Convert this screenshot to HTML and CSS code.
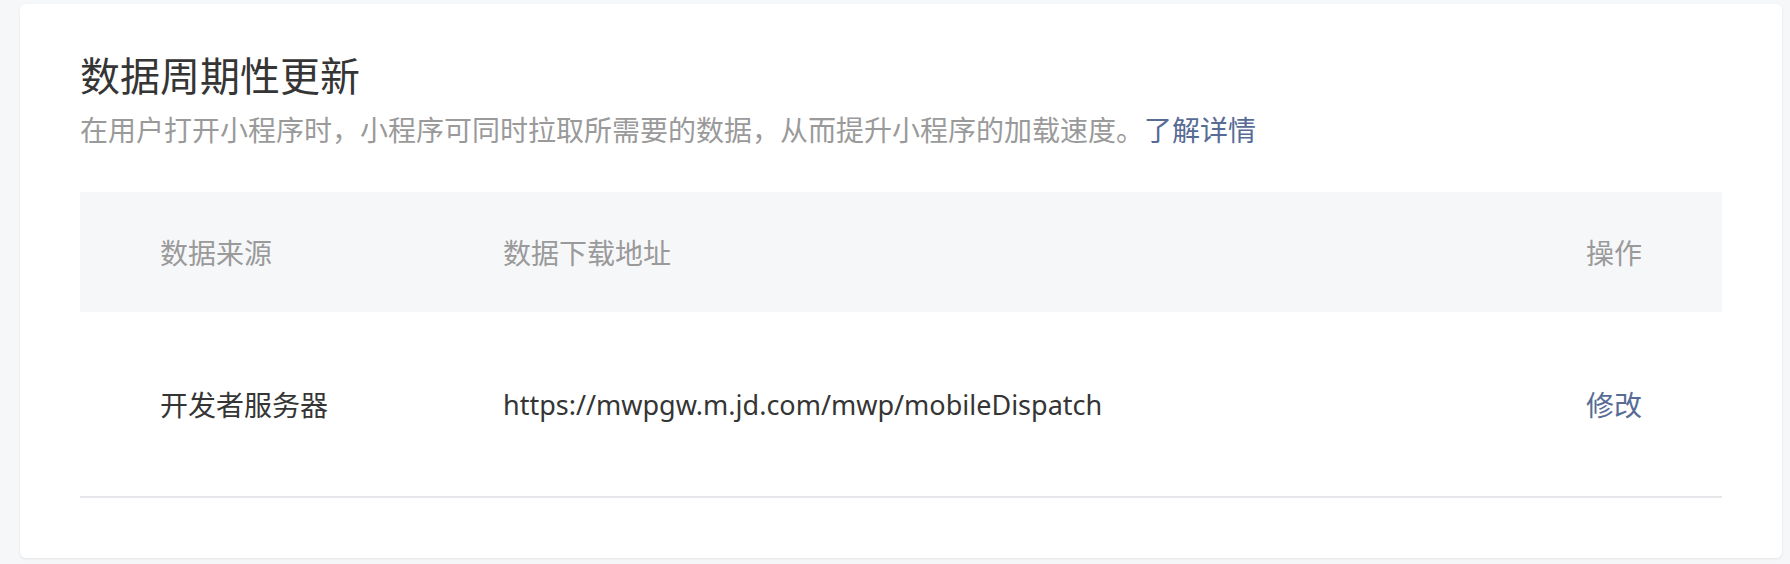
FILE: index.html
```html
<!DOCTYPE html>
<html lang="zh-CN">
<head>
<meta charset="utf-8">
<title>数据周期性更新</title>
<link rel="stylesheet" href="styles.css">
</head>
<body>
<div class="card">
  <h2 class="title">数据周期性更新</h2>
  <p class="desc">在用户打开小程序时，小程序可同时拉取所需要的数据，从而提升小程序的加载速度。<a class="link" href="#">了解详情</a></p>
  <div class="table">
    <div class="row head">
      <div class="cell">数据来源</div>
      <div class="cell">数据下载地址</div>
      <div class="cell op">操作</div>
    </div>
    <div class="row body">
      <div class="cell">开发者服务器</div>
      <div class="cell url">https://mwpgw.m.jd.com/mwp/mobileDispatch</div>
      <div class="cell op"><a class="link" href="#">修改</a></div>
    </div>
  </div>
</div>
</body>
</html>
```
FILE: styles.css
```css
html, body {
  margin: 0;
  background: #f6f7f9;
}
body {
  padding: 4px 8px 6px 20px;
  font-family: "Liberation Sans", "Noto Sans CJK SC", sans-serif;
  box-sizing: border-box;
  height: 564px;
}
.card {
  background: #fff;
  border-radius: 6px;
  box-shadow: 0 1px 3px rgba(0, 0, 0, 0.08);
  padding: 44px 60px 0 60px;
  height: 554px;
  box-sizing: border-box;
}
.title {
  margin: 0;
  font-size: 40px;
  font-weight: 400;
  line-height: 52px;
  color: #353535;
  font-family: "Noto Sans CJK SC", sans-serif;
}
.desc {
  margin: 9px 0 0;
  font-size: 28px;
  line-height: 40px;
  color: #9a9a9a;
  font-family: "Noto Sans CJK SC", sans-serif;
}
.link {
  color: #576b95;
  text-decoration: none;
}
.table {
  margin-top: 43px;
  border-bottom: 2px solid #e7e7eb;
}
.row {
  display: grid;
  grid-template-columns: 343px 1fr auto;
  align-items: center;
  padding: 0 80px;
  font-size: 28px;
}
.row.head {
  height: 120px;
  background: #f6f7f9;
  color: #9a9a9a;
}
.row.body {
  height: 184px;
  color: #353535;
}
.cell {
  font-family: "Noto Sans CJK SC", sans-serif;
}
.cell.url {
  font-family: "Noto Sans", "Noto Sans CJK SC", sans-serif;
  font-size: 27px;
}
.op {
  text-align: right;
}
```
